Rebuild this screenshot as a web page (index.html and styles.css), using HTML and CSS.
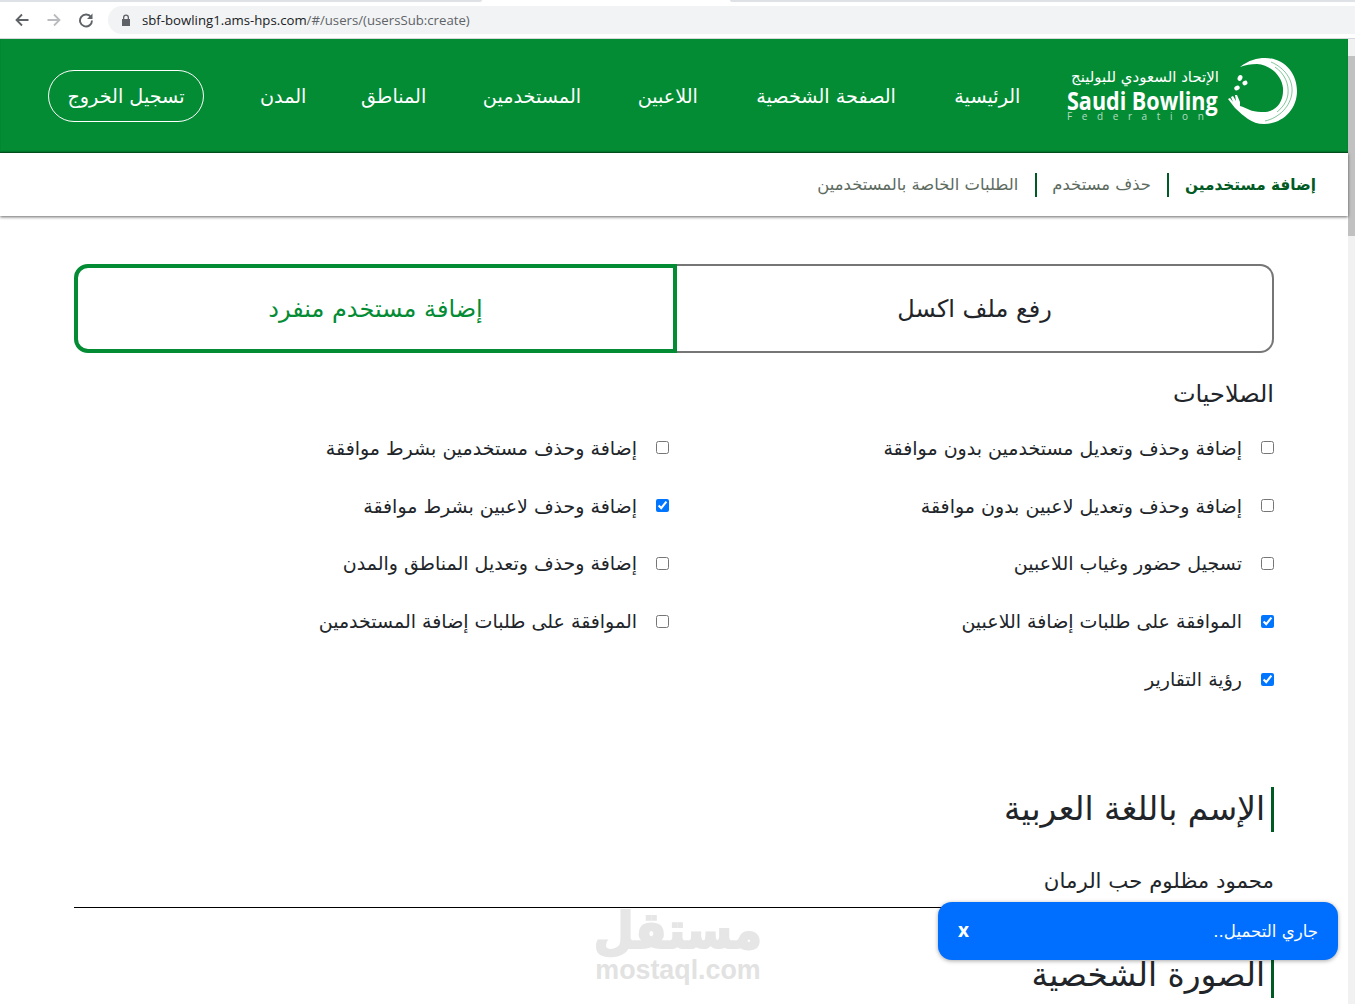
FILE: index.html
```html
<!DOCTYPE html>
<html lang="ar">
<head>
<meta charset="utf-8">
<title>Saudi Bowling Federation</title>
<link rel="stylesheet" href="styles.css">
</head>
<body>
<div class="chrome">
  <div class="tabstrip"><i class="strip-left"></i><i class="strip-right"></i></div>
  <div class="toolbar">
    <svg class="tool" viewBox="0 0 16 16"><path d="M14.500 8H3M8 2.500 2.500 8 8 13.500" fill="none" stroke="#5f6368" stroke-width="1.800"/></svg>
    <svg class="tool" viewBox="0 0 16 16"><path d="M1.500 8H13M8 2.500 13.500 8 8 13.500" fill="none" stroke="#b9bbbe" stroke-width="1.800"/></svg>
    <svg class="tool" viewBox="0 0 16 16"><path d="M13 5.200A6 6 0 1 0 14 8.500" fill="none" stroke="#5f6368" stroke-width="1.900"/><path d="M14.500 1.500v5.500H9z" fill="#5f6368"/></svg>
    <div class="omnibox">
      <svg class="lock" viewBox="0 0 10 12"><path d="M2 5V3.500a3 3 0 0 1 6 0V5h1v7H1V5zM3.300 5h3.400V3.500a1.700 1.700 0 0 0-3.400 0z" fill="#5f6368"/></svg>
      <span class="url">sbf-bowling1.ams-hps.com<span class="url-path">/#/users/(usersSub:create)</span></span>
    </div>
  </div>
</div>
<div class="viewport">
  <div class="page">
    <header class="nav">
      <div class="brand">
        <div class="brand-text">
          <div class="brand-ar">الإتحاد السعودي للبولينج</div>
          <div class="brand-en">Saudi Bowling</div>
          <div class="brand-fed">Federation</div>
        </div>
        <svg class="brand-mark" viewBox="0 0 72 68">
          <path d="M13 9C22 2 30 0 38 0 57 0 70 15 70 33 70 52 55 66 37 66 24 66 17 58 8 50L1 41 3 40 6 44 4 39 6 38 9 43 8 37 10 37 13 44 13 48C20 50 24 54 34 54 48 55 57 45 56 30 55 18 44 7 30 6 24 6 18 7 13 9Z" fill="#fff"/>
          <path d="M44 4C58 10 66 22 65 34 64 48 52 60 38 63M48 9C58 16 62 26 61 36 60 44 55 50 50 54" fill="none" stroke="#038c34" stroke-width=".5"/>
          <ellipse cx="13" cy="20" rx="2.300" ry="3" transform="rotate(25 13 20)" fill="#fff"/>
          <ellipse cx="10" cy="30" rx="2.800" ry="2.300" transform="rotate(-25 10 30)" fill="#fff"/>
          <ellipse cx="18" cy="25" rx="2.600" ry="2.200" transform="rotate(-25 18 25)" fill="#fff"/>
        </svg>
      </div>
      <nav class="menu">
        <a>الرئيسية</a><a class="menu-wide">الصفحة الشخصية</a><a>اللاعبين</a><a class="menu-mid">المستخدمين</a><a>المناطق</a><a>المدن</a>
        <a class="logout">تسجيل الخروج</a>
      </nav>
    </header>
    <div class="subnav">
      <a class="active">إضافة مستخدمين</a><a>حذف مستخدم</a><a>الطلبات الخاصة بالمستخدمين</a>
    </div>
    <main class="content">
      <div class="tabs">
        <div class="tab">رفع ملف اكسل</div>
        <div class="tab tab-on">إضافة مستخدم منفرد</div>
      </div>
      <h3 class="perm-title">الصلاحيات</h3>
      <div class="perms">
        <label class="perm"><input type="checkbox"><span>إضافة وحذف وتعديل مستخدمين بدون موافقة</span></label>
        <label class="perm"><input type="checkbox"><span>إضافة وحذف مستخدمين بشرط موافقة</span></label>
        <label class="perm"><input type="checkbox"><span>إضافة وحذف وتعديل لاعبين بدون موافقة</span></label>
        <label class="perm"><input type="checkbox" checked><span>إضافة وحذف لاعبين بشرط موافقة</span></label>
        <label class="perm"><input type="checkbox"><span>تسجيل حضور وغياب اللاعبين</span></label>
        <label class="perm"><input type="checkbox"><span>إضافة وحذف وتعديل المناطق والمدن</span></label>
        <label class="perm"><input type="checkbox" checked><span>الموافقة على طلبات إضافة اللاعبين</span></label>
        <label class="perm"><input type="checkbox"><span>الموافقة على طلبات إضافة المستخدمين</span></label>
        <label class="perm"><input type="checkbox" checked><span>رؤية التقارير</span></label>
      </div>
      <div class="field">
        <div class="field-label"><span>الإسم باللغة العربية</span></div>
        <div class="field-value">محمود مظلوم حب الرمان</div>
      </div>
      <div class="field-label field-label-next"><span>الصورة الشخصية</span></div>
    </main>
  </div>
  <div class="scrollbar"><div class="thumb"></div></div>
  <div class="watermark">
    <div class="wm-ar">مستقل</div>
    <div class="wm-en">mostaql.com</div>
  </div>
  <div class="toast">
    <span class="toast-close">x</span>
    <span class="toast-msg">جاري التحميل..</span>
  </div>
</div>
</body>
</html>
```
FILE: styles.css
```css
* { box-sizing: border-box; }
html, body { margin: 0; height: 100%; overflow: hidden; background: #fff; }
body { font-family: "DejaVu Sans", "Noto Sans", sans-serif; color: #212529; }

.chrome { height: 39px; background: #fff; border-bottom: 1px solid #d5d7da; }
.tabstrip { height: 2px; display: flex; justify-content: space-between; }
.strip-left { width: 482px; background: #dee1e6; border-bottom-right-radius: 3px; }
.strip-right { width: 625px; background: #dee1e6; border-bottom-left-radius: 3px; }
.toolbar { display: flex; align-items: center; height: 36px; padding: 0 0 0 14px; }
.tool { width: 16px; height: 16px; margin-right: 16px; flex: none; }
.omnibox { flex: 1; height: 28px; margin-left: -2px; background: #f1f3f4; border-radius: 14px 0 0 14px; display: flex; align-items: center; padding-left: 13px; }
.lock { width: 10px; height: 12px; margin-right: 11px; }
.url { font: 13.200px "Open Sans", sans-serif; color: #202124; }
.url-path { color: #5f6368; }

.viewport { position: relative; height: 965px; overflow: hidden; display: flex; }
.page { width: 1348px; flex: none; }
.scrollbar { flex: 1; background: #f1f1f1; padding-top: 17px; }
.thumb { height: 180px; background: #c1c1c1; }

.nav { height: 114px; background: #038c34; direction: rtl; display: flex; align-items: center; padding: 0 49px 0 48px; justify-content: space-between; box-shadow: inset 0 -2px 2px -1px rgba(0,50,20,.8); }
.brand { display: flex; align-items: center; gap: 8px; margin-top: -8px; direction: ltr; }
.brand-mark { width: 72px; height: 68px; }
.brand-text { width: 152px; color: #fff; text-align: right; padding-top: 4px; }
.brand-ar { font-size: 15px; line-height: 18px; direction: rtl; text-align: right; }
.brand-en { width: max-content; font: 700 25px/24px "Open Sans", sans-serif; transform: scaleX(.862); transform-origin: 0 50%; white-space: nowrap; margin-top: 2px; }
.brand-fed { font: 10px/9px "Open Sans", sans-serif; letter-spacing: 9.600px; color: #b7dcc3; text-align: left; white-space: nowrap; }
.menu { display: flex; align-items: center; gap: 54.700px; color: #fff; font-size: 19.200px; }
.menu a { text-align: center; padding-top: 1px; }
.menu .menu-wide { width: 147px; }
.menu .menu-mid { width: 102px; }
.menu .logout { display: flex; align-items: center; justify-content: center; width: 156px; height: 52px; border: 1px solid #fff; border-radius: 26px; margin-right: 1.300px; }

.subnav { height: 63px; background: #fff; direction: rtl; display: flex; align-items: center; padding-right: 32px; font-size: 16.400px; color: #5d6b5f; box-shadow: 0 1px 3px rgba(0,0,0,.6); position: relative; }
.subnav a { padding: 0 16px 0 15px; border-left: 2px solid #005a24; line-height: 24px; }
.subnav a:first-child { padding: 0 0 0 16px; }
.subnav a:last-child { padding-right: 17px; border-left: 0; }
.subnav .active { font-weight: 700; color: #005a24; font-size: 15.300px; }

.content { direction: rtl; padding: 48px 74px 0; }
.tabs { display: flex; height: 89px; }
.tab { flex: 1; display: flex; align-items: center; justify-content: center; border: 2px solid #767676; border-left: 0; border-radius: 0 14px 14px 0; font-size: 24px; color: #212529; }
.tab-on { flex: none; width: 603px; border: 4px solid #038c34; border-radius: 14px 0 0 14px; color: #038c34; }
.perm-title { margin: 25px 0 0; font-size: 24px; font-weight: 400; line-height: 32px; }
.perms { display: grid; grid-template-columns: 1fr 1fr; margin-top: 9px; }
.perm { display: flex; align-items: center; height: 57.800px; font-size: 19px; gap: 19px; }
.perm input { width: 13px; height: 13px; margin: 0; flex: none; }
.perm:nth-child(even) { padding-right: 5px; }
.field { margin-top: 79px; }
.field-label { display: flex; }
.field-label span { border-right: 3px solid #005a24; padding-right: 6px; font-size: 32.800px; line-height: 45px; color: #212529; }
.field-value { margin-top: 29px; height: 47px; border-bottom: 1px solid #000; font-size: 21.300px; line-height: 40px; }
.field-label-next { margin-top: 45px; }

.watermark { position: absolute; left: 594px; top: 868px; width: 168px; text-align: center; color: #e6e6e6; }
.wm-ar { font-size: 46px; font-weight: 700; line-height: 52px; direction: rtl; -webkit-text-stroke: 2px #e6e6e6; transform: scaleY(1.1); transform-origin: 50% 100%; }
.wm-en { font: 700 26.800px/22px "Liberation Sans", sans-serif; color: #e2e2e2; }
.toast { position: absolute; left: 938px; top: 863px; width: 400px; height: 58px; background: #006eff; color: #fff; border-radius: 14px; box-shadow: 0 1px 4px rgba(0,0,0,.35); display: flex; align-items: center; justify-content: space-between; padding: 0 20px; }
.toast-close { font: 700 19px "Open Sans", sans-serif; margin-top: -3px; }
.toast-msg { font-size: 16.600px; direction: rtl; }
```
